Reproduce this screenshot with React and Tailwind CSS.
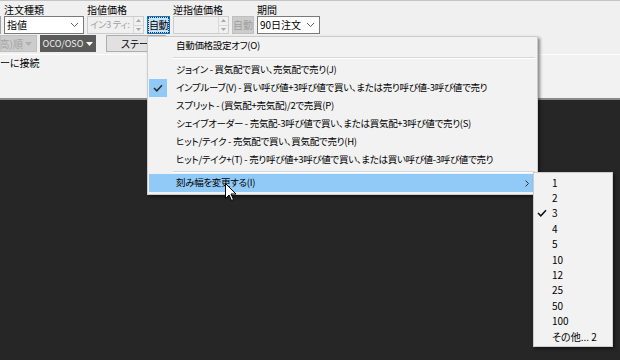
import React from "react";

const F = "font-['Noto_Sans_CJK_JP','Noto_Sans',sans-serif] [font-feature-settings:'palt']";

function Chevron() {
  return (
    <svg width="9" height="6" viewBox="0 0 9 6" className="shrink-0">
      <path d="M1 1 L4.5 4.5 L8 1" fill="none" stroke="#606060" strokeWidth="1" />
    </svg>
  );
}

function Spinner() {
  return (
    <div className="flex flex-col w-[10px] h-full border-l border-[#d9d9d9]">
      <div className="flex-1 flex items-center justify-center border-b border-[#d9d9d9]">
        <svg width="5" height="3" viewBox="0 0 5 3"><path d="M0 3 L2.5 0 L5 3Z" fill="#a8a8a8" /></svg>
      </div>
      <div className="flex-1 flex items-center justify-center">
        <svg width="5" height="3" viewBox="0 0 5 3"><path d="M0 0 L2.5 3 L5 0Z" fill="#a8a8a8" /></svg>
      </div>
    </div>
  );
}

function Caret({ color }) {
  return (
    <svg width="7" height="4" viewBox="0 0 7 4" className="shrink-0">
      <path d="M0 0 L7 0 L3.5 4Z" fill={color} />
    </svg>
  );
}

const items = [
  "ジョイン - 買気配で買い、売気配で売り(J)",
  "インプルーブ(V) - 買い呼び値+3呼び値で買い、または売り呼び値-3呼び値で売り",
  "スプリット - (買気配+売気配)/2で売買(P)",
  "シェイブオーダー - 売気配-3呼び値で買い、または買気配+3呼び値で売り(S)",
  "ヒット/テイク - 売気配で買い、買気配で売り(H)",
  "ヒット/テイク+(T) - 売り呼び値+3呼び値で買い、または買い呼び値-3呼び値で売り",
];

const subItems = ["1", "2", "3", "4", "5", "10", "12", "25", "50", "100", "その他... 2"];

function Check({ color = "#333" }) {
  return (
    <svg width="10" height="8" viewBox="0 0 10 8">
      <path d="M1 4 L3.8 6.8 L9 1.2" fill="none" stroke={color} strokeWidth="1.5" />
    </svg>
  );
}

export default function App() {
  return (
    <div className={`relative w-[620px] h-[360px] overflow-hidden bg-[#262626] text-[10px] text-black ${F}`}>
      {/* top panel */}
      <div className="h-[100px] bg-[#f0f0f0] border-t border-[#c4c4c4] border-b-2 border-b-[#8a8a8a] flex flex-col">
        {/* labels */}
        <div className="h-[15px] flex items-end leading-none pb-[1px]">
          <div className="w-[87px] pl-[4px]">注文種類</div>
          <div className="w-[86px]">指値価格</div>
          <div className="w-[84px]">逆指値価格</div>
          <div>期間</div>
        </div>
        {/* controls */}
        <div className="h-[18px] flex gap-[3px] leading-none">
          <div className="w-[1px] border-y border-r border-[#a0a0a0] bg-[#e1e1e1]" />
          <div className="w-[80px] bg-white border border-[#7a7a7a] flex items-center pl-[2px] pr-[4px] justify-between">
            <span>指値</span>
            <Chevron />
          </div>
          <div className="w-[57px] bg-[#f0f0f0] border border-[#cccccc] flex items-center">
            <span className="flex-1 min-w-0 pl-[2px] text-[9.5px] tracking-[-0.4px] text-[#a0a0a0] whitespace-nowrap">イン3 ティ:</span>
            <Spinner />
          </div>
          <div className="w-[23px] bg-[#cce4f7] border border-[#0078d7]">
            <div className="h-full border border-dotted border-[#333] flex items-center justify-center whitespace-nowrap tracking-[-0.5px]">自動</div>
          </div>
          <div className="w-[56px] bg-[#f0f0f0] border border-[#cccccc] flex items-center">
            <span className="flex-1" />
            <Spinner />
          </div>
          <div className="w-[22px] bg-[#cccccc] border border-[#bfbfbf] flex items-center justify-center whitespace-nowrap text-[#9d9d9d]">自動</div>
          <div className="w-[63px] bg-white border border-[#7a7a7a] flex items-center pl-[2px] pr-[4px] justify-between">
            <span>90日注文</span>
            <Chevron />
          </div>
        </div>
        {/* buttons row */}
        <div className="h-[17px] flex leading-none mt-[1px]">
          <div className="w-[37px] bg-[#cccccc] border border-[#bfbfbf] flex items-center justify-end pr-[4px] gap-[2px] text-[#a3a3a3] overflow-hidden whitespace-nowrap">
            <span>高)順</span>
            <Caret color="#b0b0b0" />
          </div>
          <div className="w-[56px] ml-[3px] bg-[#5b5b5b] flex items-center justify-center gap-[3px] text-[9px] text-[#f0f0f0]">
            <span>OCO/OSO</span>
            <Caret color="#ffffff" />
          </div>
          <div className="w-[60px] ml-[10px] bg-[#e1e1e1] border border-[#adadad] flex items-center pl-[14px] whitespace-nowrap">
            ステータス
          </div>
        </div>
        {/* status row */}
        <div className="mt-[2px] border-t border-[#fcfcfc] flex-1 bg-[#f2f2f2]">
          <div className="pt-[3px] leading-none">ーに接続</div>
        </div>
      </div>

      {/* main context menu */}
      <div className="absolute left-[147px] top-[36px] w-[391px] bg-[#f2f2f2] border border-[#cccccc] shadow-[2px_2px_3px_rgba(0,0,0,0.45)] px-[1px] pb-[2px] leading-none text-[9.5px] tracking-[-0.3px]">
        <div className="h-[18px] flex items-center pl-[27px]">自動価格設定オフ(O)</div>
        <div className="h-[6px] flex items-center pl-[24px] pr-[1px]">
          <div className="w-full h-[2px] border-t border-[#d7d7d7] border-b border-b-white" />
        </div>
        {items.map((t, i) => (
          <div key={i} className="h-[18px] flex items-center relative">
            {i === 1 && (
              <div className="absolute left-0 top-0 w-[18px] h-[18px] bg-[#90c8f6] flex items-center justify-center">
                <Check color="#2b2b2b" />
              </div>
            )}
            <span className="pl-[27px] whitespace-nowrap">{t}</span>
          </div>
        ))}
        <div className="h-[5px] flex items-center pl-[24px] pr-[1px]">
          <div className="w-full h-[2px] border-t border-[#d7d7d7] border-b border-b-white" />
        </div>
        <div className="h-[18px] flex items-center justify-between bg-[#91c9f7] pl-[27px] pr-[7px]">
          <span>刻み幅を変更する(I)</span>
          <svg width="4" height="7" viewBox="0 0 4 7"><path d="M0.5 0.5 L3.5 3.5 L0.5 6.5" fill="none" stroke="#333" strokeWidth="1" /></svg>
        </div>
      </div>

      {/* submenu */}
      <div className="absolute left-[533px] top-[172px] w-[80px] h-[175px] bg-[#f2f2f2] border border-[#cccccc] shadow-[2px_2px_3px_rgba(0,0,0,0.45)] pt-[2px] leading-none">
        {subItems.map((t, i) => (
          <div key={i} className="h-[15.4px] flex items-center relative">
            {i === 2 && (
              <div className="absolute left-[3px] top-0 h-full flex items-center">
                <Check color="#111" />
              </div>
            )}
            <span className="pl-[18px] whitespace-nowrap">{t}</span>
          </div>
        ))}
      </div>

      {/* mouse cursor */}
      <svg className="absolute left-[225px] top-[183px]" width="12" height="19" viewBox="0 0 12 19">
        <path d="M0.5 0.5 L0.5 15.5 L4 12 L6.5 17.5 L8.5 16.5 L6 11 L11 11 Z" fill="#fff" stroke="#000" strokeWidth="1" strokeLinejoin="miter" />
      </svg>
    </div>
  );
}
